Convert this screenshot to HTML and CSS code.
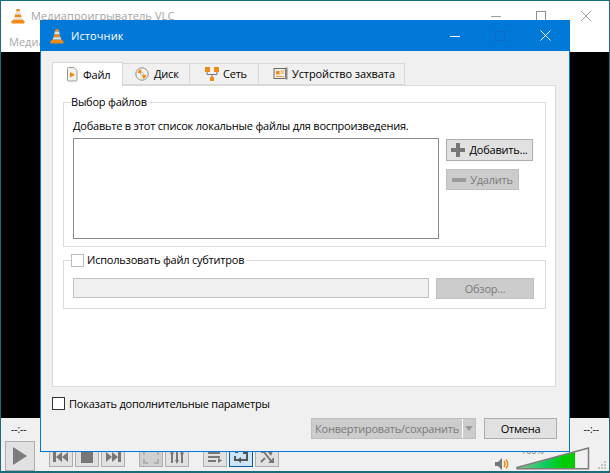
FILE: index.html
```html
<!DOCTYPE html>
<html lang="ru">
<head>
<meta charset="utf-8">
<title>Источник</title>
<link rel="stylesheet" href="styles.css">
</head>
<body>
<svg class="defs" width="0" height="0" aria-hidden="true">
  <defs>
    <symbol id="cone" viewBox="0 0 16 16">
      <path d="M1 14.2 3.2 11.5H12.8L15 14.2 13.8 15.5H2.2Z" fill="#f08a12"/>
      <path d="M6.6 1 5.9 3.6H10.1L9.4 1Z" fill="#f08a12"/>
      <path d="M5.9 3.6 5.2 6.5H10.8L10.1 3.6Z" fill="#e6e0d8"/>
      <path d="M5.2 6.5 4.4 9.2H11.6L10.8 6.5Z" fill="#f08a12"/>
      <path d="M4.4 9.2 3.8 11.6H12.2L11.6 9.2Z" fill="#e6e0d8"/>
    </symbol>
  </defs>
</svg>

<div class="player">
  <header class="player-title">
    <svg class="cone-icon"><use href="#cone"/></svg>
    <span class="player-name">Медиапроигрыватель VLC</span>
    <div class="caption-buttons">
      <svg width="10" height="16" viewBox="0 0 10 16"><path d="M0 8.5H10" stroke="#a0a0a0"/></svg>
      <svg width="10" height="16" viewBox="0 0 10 16"><rect x="0.5" y="3.5" width="9" height="9" fill="none" stroke="#909090"/></svg>
      <svg width="10" height="16" viewBox="0 0 10 16"><path d="M0 3 10 13M10 3 0 13" stroke="#a0a0a0" fill="none"/></svg>
    </div>
  </header>
  <nav class="player-menu">Медиа</nav>
  <div class="video"></div>
  <div class="seek-row">
    <span class="time">--:--</span>
    <span class="time">--:--</span>
  </div>
  <div class="controls">
    <button class="play" aria-label="Воспроизвести">
      <svg width="16" height="20" viewBox="0 0 16 20"><path d="M1 1 15 10 1 19Z" fill="#7b7b7b"/></svg>
    </button>
    <div class="ctl-group first">
      <span class="ctl"><svg width="18" height="12" viewBox="0 0 18 12"><path d="M1 1H4V11H1ZM10 1V11L4 6ZM16 1V11L10 6Z" fill="#777"/></svg></span>
      <span class="ctl"><svg width="12" height="12" viewBox="0 0 12 12"><rect x="0" y="1" width="12" height="11" fill="#777"/></svg></span>
      <span class="ctl"><svg width="18" height="12" viewBox="0 0 18 12"><path d="M2 1 8 6 2 11ZM8 1 14 6 8 11ZM14 1H17V11H14Z" fill="#777"/></svg></span>
    </div>
    <div class="ctl-group">
      <span class="ctl dim"><svg width="16" height="14" viewBox="0 0 16 14"><path d="M1 5V1H5M11 1H15V5M15 9V13H11M5 13H1V9" fill="none" stroke="#b0b0b0" stroke-width="2"/></svg></span>
      <span class="ctl"><svg width="16" height="14" viewBox="0 0 16 14"><path d="M3 3V13M8 1V11M13 3V13" stroke="#777" stroke-width="2"/><path d="M1 4 3 0 5 4ZM6 10 8 14 10 10ZM11 4 13 0 15 4Z" fill="#777"/></svg></span>
    </div>
    <div class="ctl-group">
      <span class="ctl"><svg width="16" height="12" viewBox="0 0 16 12"><path d="M1 1H13V3H1ZM1 5H13V7H1ZM1 9H9V11H1ZM11 7 15 9.500 11 12Z" fill="#777"/></svg></span>
      <span class="ctl active"><svg width="16" height="14" viewBox="0 0 16 14"><path d="M2 6V10H14V3H10" fill="none" stroke="#555" stroke-width="2"/><path d="M2 2H5" stroke="#555" stroke-width="2"/><path d="M8 7 4 10 8 13Z" fill="#555"/></svg></span>
      <span class="ctl"><svg width="16" height="14" viewBox="0 0 16 14"><path d="M2 2H5L12 11M2 12 6 8" stroke="#777" stroke-width="2" fill="none"/><path d="M8 1H14L12 6ZM9 13H15V7Z" fill="#777"/></svg></span>
    </div>
    <div class="volume">
      <svg class="speaker" width="15" height="14" viewBox="0 0 15 14"><path d="M0 5H3L7 1V13L3 9H0Z" fill="#777"/><path d="M9 4Q11 7 9 10M11 2.500Q14.500 7 11 11.500" fill="none" stroke="#f08a12" stroke-width="1.500"/></svg>
      <div class="vol-meter">
        <span class="vol-label">100%</span>
        <svg width="74" height="23" viewBox="0 0 74 23">
          <defs>
            <linearGradient id="volFill" x1="0" x2="1" y1="0" y2="0">
              <stop offset="0" stop-color="#8fbf8f"/>
              <stop offset="0.5" stop-color="#08cc60"/>
              <stop offset="0.8" stop-color="#00cc00"/>
            </linearGradient>
          </defs>
          <path d="M1 21 59 5V22H1Z" fill="url(#volFill)"/>
          <path d="M1 20.500 72.500 1V21.800H1Z" fill="none" stroke="#7b7b7b" stroke-width="1.500"/>
        </svg>
      </div>
      <svg class="grip" width="10" height="10" viewBox="0 0 10 10"><path d="M7 1H9V3H7ZM4 4H6V6H4ZM7 4H9V6H7ZM1 7H3V9H1ZM4 7H6V9H4ZM7 7H9V9H7Z" fill="#c4c4c4"/></svg>
    </div>
  </div>
</div>

<section class="dialog">
  <header class="dialog-title">
    <svg class="cone-icon"><use href="#cone"/></svg>
    <span class="dialog-name">Источник</span>
    <div class="dialog-caption">
      <svg width="10" height="10" viewBox="0 0 10 10"><path d="M0 5.500H10" stroke="#fff"/></svg>
      <svg width="10" height="10" viewBox="0 0 10 10"><rect x="0.500" y="0.500" width="9" height="9" fill="none" stroke="#0a6cc0"/></svg>
      <svg width="11" height="11" viewBox="0 0 11 11"><path d="M0.500 0.500 10.500 10.500M10.500 0.500 0.500 10.500" stroke="#fff" fill="none"/></svg>
    </div>
  </header>

  <div class="dialog-body">
    <div class="tabs">
      <div class="tab selected">
        <svg width="12" height="15" viewBox="0 0 12 15"><path d="M1.500 1.500C1.500 1 2 .5 2.500 .5H8L11 3.500V13C11 13.700 10.500 14 10 14H2.500C2 14 1.500 13.700 1.500 13Z" fill="#f4f1ec" stroke="#9a9a9a"/><path d="M4 5 9 7.800 4 10.500Z" fill="#f08a12"/></svg>
        <span>Файл</span>
      </div>
      <div class="tab">
        <svg width="14" height="14" viewBox="0 0 14 14"><circle cx="7" cy="7" r="6.200" fill="#f7f3ea" stroke="#8c8c8c"/><path d="M7 7 2.500 5.500A4.800 4.800 0 0 1 6 2.300ZM7 7 11.500 8.500A4.800 4.800 0 0 1 8 11.700Z" fill="#f08a12"/><circle cx="7" cy="7" r="1.400" fill="#fff" stroke="#999" stroke-width=".6"/></svg>
        <span>Диск</span>
      </div>
      <div class="tab">
        <svg width="16" height="15" viewBox="0 0 16 15"><path d="M3 5V7.500H13V5M8 7.500V10" fill="none" stroke="#777"/><path d="M1 0H6V5H1ZM10 0H15V5H10ZM6 10H10V14H6Z" fill="#f08a12"/></svg>
        <span>Сеть</span>
      </div>
      <div class="tab">
        <svg width="15" height="14" viewBox="0 0 15 14"><rect x="1" y="1.500" width="11.500" height="10" fill="#f6f0e2" stroke="#6a6a6a"/><path d="M3 4H6.500V7.500H3Z" fill="#f08a12"/><path d="M7.500 4H11M7.500 6H11M3 9.500H11" stroke="#e0a050"/><path d="M13.500 0.500V12.500" stroke="#8a8a8a" stroke-width="2"/></svg>
        <span>Устройство захвата</span>
      </div>
    </div>

    <div class="tab-pane">
      <fieldset class="group files">
        <legend>Выбор файлов</legend>
        <p class="hint">Добавьте в этот список локальные файлы для воспроизведения.</p>
        <div class="file-row">
          <div class="file-list"></div>
          <div class="file-actions">
            <button class="btn add">
              <svg width="14" height="14" viewBox="0 0 14 14"><path d="M5 0H9V5H14V9H9V14H5V9H0V5H5Z" fill="#777"/></svg>
              Добавить...
            </button>
            <button class="btn remove" disabled>
              <svg width="14" height="14" viewBox="0 0 14 14"><path d="M0 5H14V9H0Z" fill="#9a9a9a"/></svg>
              Удалить
            </button>
          </div>
        </div>
      </fieldset>

      <fieldset class="group subs">
        <legend><span class="check soft"></span>Использовать файл субтитров</legend>
        <div class="sub-row">
          <div class="sub-path"></div>
          <button class="btn browse" disabled>Обзор...</button>
        </div>
      </fieldset>
    </div>

    <label class="more-options"><span class="check"></span>Показать дополнительные параметры</label>

    <div class="dialog-actions">
      <div class="convert">
        <span class="convert-label">Конвертировать/сохранить</span>
        <span class="convert-arrow"><svg width="8" height="5" viewBox="0 0 8 5"><path d="M0 0H8L4 5Z" fill="#9a9a9a"/></svg></span>
      </div>
      <button class="btn cancel">Отмена</button>
    </div>
  </div>
</section>
</body>
</html>
```

FILE: styles.css
```css
* {
  box-sizing: border-box;
}

html,
body {
  margin: 0;
  height: 100%;
}

body {
  position: relative;
  width: 610px;
  height: 473px;
  overflow: hidden;
  font: 11px/14px "Open Sans", "Noto Sans", sans-serif;
  letter-spacing: -0.22px;
  color: #000;
  background: #f0f0f0;
}

.defs {
  position: absolute;
}

.cone-icon {
  width: 16px;
  height: 16px;
  flex: none;
}

/* Main player window, sitting behind the dialog */
.player {
  display: flex;
  flex-direction: column;
  width: 610px;
  height: 473px;
  border: 1px solid #1b6d7c;
  border-bottom-width: 2px;
}

.player-title {
  display: flex;
  align-items: center;
  height: 29px;
  padding: 0 18px 0 9px;
  background: #fff;
}

.player-name {
  margin-left: 5px;
  letter-spacing: 0.1px;
  color: #a3a3a3;
}

.caption-buttons {
  display: flex;
  align-items: center;
  gap: 35px;
  margin-left: auto;
}

.player-menu {
  height: 22px;
  padding: 5px 0 0 8px;
  letter-spacing: 0;
  background: #fff;
  color: #a8a8a8;
}

.video {
  flex: 1;
  background: #000;
}

.seek-row {
  display: flex;
  justify-content: space-between;
  height: 21px;
  padding: 4px 10px 0;
  font-size: 10px;
  letter-spacing: 0;
  background: #f0f0f0;
}

.controls {
  display: flex;
  align-items: flex-end;
  height: 32px;
  padding: 0 0 0 4px;
  background: #f0f0f0;
}

.play {
  display: flex;
  align-items: center;
  justify-content: center;
  width: 30px;
  height: 30px;
  padding: 0;
  border: 1px solid #adadad;
  background: #e1e1e1;
}

.ctl-group {
  display: flex;
  margin-left: 12px;
  margin-bottom: 4px;
}

.ctl-group.first {
  margin-left: 14px;
}

.ctl {
  display: flex;
  align-items: center;
  justify-content: center;
  width: 24px;
  height: 20px;
  margin-right: 2px;
  border: 1px solid #adadad;
  background: #e1e1e1;
}

.ctl.dim {
  background: #cfcfcf;
}

.ctl.active {
  border-color: #0a5aa0;
  background: #cce4f7;
}

.volume {
  display: flex;
  align-items: flex-end;
  margin-left: auto;
}

.vol-meter {
  position: relative;
  margin-left: 6px;
  width: 74px;
  height: 23px;
  margin-bottom: 1px;
}

.vol-label {
  position: absolute;
  top: -1px;
  left: 5px;
  font-size: 9px;
  line-height: 10px;
  letter-spacing: 0;
  color: #777;
}

.grip {
  margin: 0 2px 1px 7px;
}

/* Source dialog, floating over the player */
.dialog {
  position: absolute;
  left: 40px;
  top: 20px;
  display: flex;
  flex-direction: column;
  width: 530px;
  height: 432px;
  border: 1px solid #0078d7;
  border-top: 0;
  background: #f0f0f0;
}

.dialog-title {
  display: flex;
  align-items: center;
  flex: none;
  height: 31px;
  padding: 0 18px 0 8px;
  background: #0078d7;
  color: #fff;
}

.dialog-name {
  margin-left: 6px;
  letter-spacing: 0.1px;
}

.dialog-caption {
  display: flex;
  align-items: center;
  gap: 35px;
  margin-left: auto;
}

.dialog-body {
  position: relative;
  flex: 1;
  padding: 11px 13px 0 11px;
}

.tabs {
  display: flex;
  height: 23px;
}

.tab {
  position: relative;
  display: flex;
  align-items: center;
  gap: 5px;
  height: 22px;
  margin-top: 1px;
  padding: 0 0 0 12px;
  border: 1px solid #d9d9d9;
  border-left: 0;
  background: #f0f0f0;
  white-space: nowrap;
}

.tab.selected {
  z-index: 1;
  height: 24px;
  margin-top: 0;
  width: 71px;
  padding-left: 13px;
  border-left: 1px solid #d9d9d9;
  border-bottom: 0;
  background: #fff;
}

.tab:nth-child(2) {
  width: 67px;
}

.tab:nth-child(3) {
  width: 69px;
  padding-left: 14px;
  gap: 3px;
}

.tab:nth-child(4) {
  width: 146px;
  padding-left: 14px;
  gap: 4px;
  letter-spacing: -0.1px;
}

.tab-pane {
  height: 302px;
  padding: 9px 9px 0 10px;
  border: 1px solid #d9d9d9;
  background: #fff;
}

.group {
  margin: 0;
  padding: 0;
  min-width: 0;
  border: 1px solid #dcdcdc;
}

.group legend {
  display: flex;
  align-items: center;
  margin-left: -2px;
  padding: 0 2px 0 0;
  height: 14px;
}

.files {
  height: 152px;
  padding: 0 11px 0 9px;
}

.hint {
  margin: 10px 0 5px;
  line-height: 14px;
}

.file-row {
  display: flex;
  align-items: flex-start;
}

.file-list {
  width: 366px;
  height: 101px;
  border: 1px solid #828790;
  background: #fff;
}

.file-actions {
  display: flex;
  flex-direction: column;
  align-items: flex-start;
  gap: 8px;
  margin: 1px 0 0 7px;
}

.btn {
  display: flex;
  align-items: center;
  justify-content: center;
  gap: 4px;
  padding: 0;
  border: 1px solid #adadad;
  background: #e1e1e1;
  color: #000;
  font: inherit;
  letter-spacing: inherit;
}

.btn:disabled {
  border-color: #bfbfbf;
  background: #cccccc;
  color: #7a7a7a;
}

.add {
  width: 87px;
  height: 22px;
}

.remove {
  width: 73px;
  height: 21px;
}

.subs {
  height: 56px;
  margin-top: 6px;
  padding: 0 10px 0 9px;
}

.check {
  display: inline-block;
  flex: none;
  width: 13px;
  height: 13px;
  margin-right: 3px;
  border: 1px solid #333;
  background: #fff;
}

.check.soft {
  border-color: #bdbdbd;
}

.sub-row {
  display: flex;
  gap: 7px;
  margin-top: 11px;
}

.sub-path {
  width: 356px;
  height: 20px;
  border: 1px solid #bfbfbf;
  background: #f0f0f0;
}

.browse {
  width: 98px;
  height: 21px;
}

.more-options {
  display: flex;
  align-items: center;
  margin: 10px 0 0 0;
  height: 13px;
}

.more-options .check {
  margin-right: 4px;
}

.dialog-actions {
  position: absolute;
  right: 12px;
  bottom: 12px;
  display: flex;
  gap: 8px;
}

.convert {
  display: flex;
  width: 165px;
  height: 21px;
  border: 1px solid #bfbfbf;
  background: #cccccc;
  color: #7a7a7a;
}

.convert-label {
  flex: 1;
  padding: 3px 0 0 3px;
  white-space: nowrap;
}

.convert-arrow {
  display: flex;
  align-items: center;
  justify-content: center;
  width: 13px;
  border-left: 1px solid #fff;
}

.cancel {
  width: 73px;
  height: 21px;
}
```
